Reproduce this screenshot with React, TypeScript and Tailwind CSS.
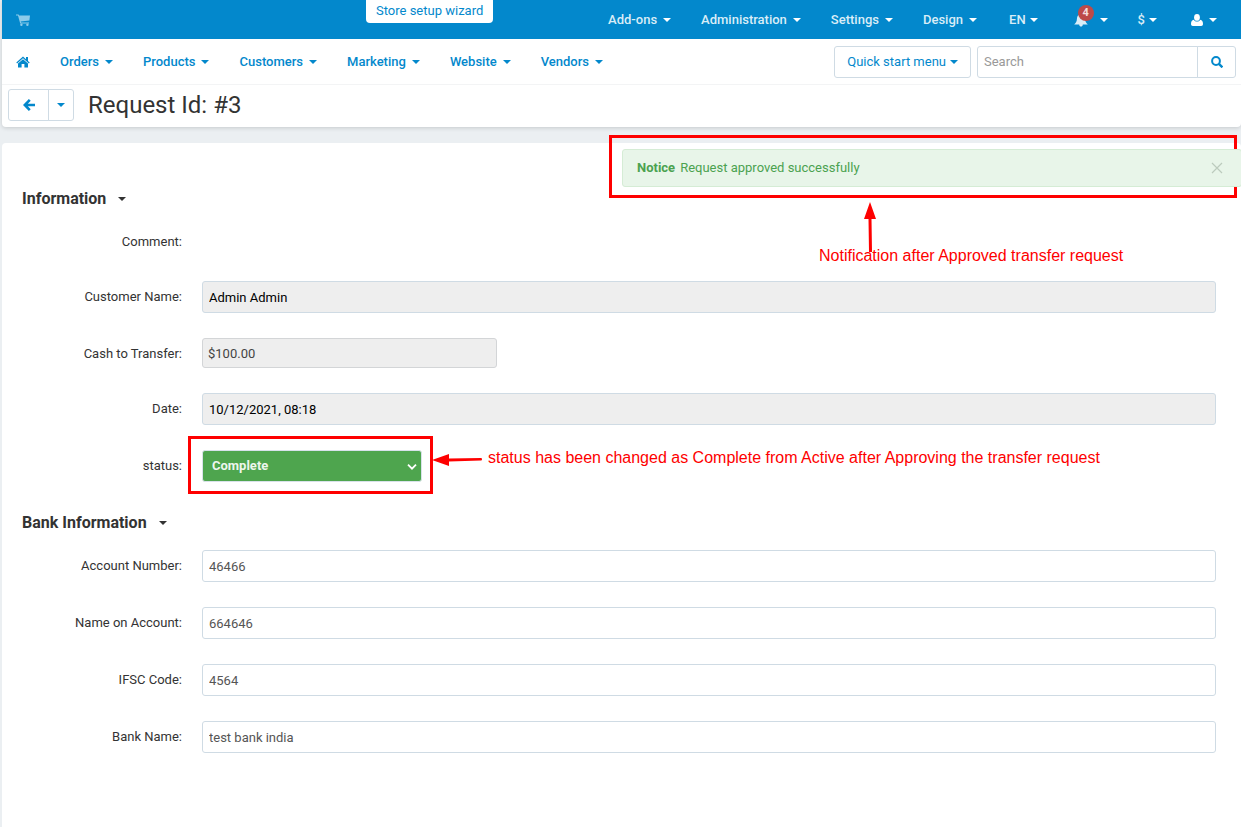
import type { ReactNode } from "react";

function Caret({ className = "" }: { className?: string }) {
  return (
    <svg className={`h-1 w-2 shrink-0 ${className}`} viewBox="0 0 8 4" fill="currentColor" aria-hidden="true">
      <path d="M0 0h8L4 4z" />
    </svg>
  );
}

function CartIcon() {
  return (
    <svg className="h-3 w-3.5" viewBox="0 0 14 12" fill="currentColor" aria-hidden="true">
      <path d="M0 .4h2.600l.5 1.100H14l-.6 4.900-8.700 1 .3 1h8v1.100H4.200L2 1.400H0z" />
      <circle cx="5.400" cy="10.800" r="1.200" />
      <circle cx="11.400" cy="10.800" r="1.200" />
    </svg>
  );
}

function HomeIcon() {
  return (
    <svg className="h-3 w-3.5" viewBox="0 0 14 12" fill="currentColor" aria-hidden="true">
      <path d="M7 .5 10 3.200V1h2v4l1.700 1.500-.8.900L7 2.200 1.100 7.400l-.8-.9z" />
      <path d="M7 3.200 12 7.600V11.500H8.400V8H5.600v3.500H2V7.600z" />
    </svg>
  );
}

function BellIcon() {
  return (
    <svg className="h-3.5 w-3.5" viewBox="0 0 14 14" fill="currentColor" aria-hidden="true">
      <path d="M7 .5c.7 0 1.100.4 1.100 1C10.200 2 11 3.800 11.100 6c.1 2.400.9 3.900 2.700 5.500H.2C2 9.900 2.800 8.400 2.900 6 3 3.800 3.800 2 5.900 1.500c0-.6.4-1 1.100-1zM5.200 11.500h3.600C8.700 13 8 13.600 7 13.600s-1.700-.6-1.800-2.100z" />
    </svg>
  );
}

function UserIcon() {
  return (
    <svg className="h-3 w-3" viewBox="0 0 12 12" fill="currentColor" aria-hidden="true">
      <ellipse cx="6" cy="3.400" rx="2.900" ry="3.400" />
      <path d="M2.700 5.700C1 6.100 0 7.400 0 10c0 1.300.7 2 1.800 2h8.400c1.100 0 1.800-.7 1.800-2 0-2.600-1-3.900-2.700-4.300C8.500 7 7.300 7.600 6 7.600S3.500 7 2.700 5.700z" />
    </svg>
  );
}

function BackIcon() {
  return (
    <svg className="h-3 w-3" viewBox="0 0 12 12" fill="none" stroke="currentColor" strokeWidth="2.600" aria-hidden="true">
      <path d="M6.800.9 1.800 6l5 5.100M2 6h10" />
    </svg>
  );
}

function SearchIcon() {
  return (
    <svg className="h-3 w-3" viewBox="0 0 12 12" fill="none" stroke="currentColor" strokeWidth="2" aria-hidden="true">
      <circle cx="5" cy="5" r="3.900" />
      <path d="m7.900 7.900 3.500 3.500" strokeWidth="2.300" />
    </svg>
  );
}

function TopItem({ children, label, className = "gap-1.5" }: { children: ReactNode; label?: string; className?: string }) {
  return (
    <button type="button" aria-label={label} className={`flex items-center font-medium text-[#d9edf7] ${className}`}>
      {children}
      <Caret className="text-white" />
    </button>
  );
}

function TopBar() {
  return (
    <header className="flex h-[39px] items-center bg-[#0388cc] pr-6 pl-3.5">
      <a href="#store" aria-label="Storefront" className="text-[#8ccbea]">
        <CartIcon />
      </a>
      <a href="#wizard" className="ml-[336px] h-[23px] self-start rounded-b-[4px] bg-white px-2.5 leading-[21px] whitespace-nowrap text-[#0388cc]">
        Store setup wizard
      </a>
      <nav className="ml-auto flex items-center gap-[30px] whitespace-nowrap">
        <TopItem>Add-ons</TopItem>
        <TopItem>Administration</TopItem>
        <TopItem>Settings</TopItem>
        <TopItem>Design</TopItem>
        <TopItem className="ml-0.5 gap-1">EN</TopItem>
        <TopItem label="Notifications" className="ml-1.5 gap-3">
          <span className="relative">
            <BellIcon />
            <span className="absolute -top-2 left-1 size-4 rounded-full bg-[#bd4a49] text-center text-[11px] leading-4 font-bold text-[#f3dddd]">4</span>
          </span>
        </TopItem>
        <TopItem label="Currency" className="gap-1">$</TopItem>
        <TopItem label="Account" className="ml-1 gap-1.5">
          <span className="text-white"><UserIcon /></span>
        </TopItem>
      </nav>
    </header>
  );
}

const menus = ["Orders", "Products", "Customers", "Marketing", "Website", "Vendors"];

function MainNav() {
  return (
    <div className="flex h-[46px] items-center border-b border-[#f3f4f5] pr-[5px] pl-3.5 text-[#0388cc]">
      <nav className="flex items-center gap-[30px] font-medium">
        <a href="#home" aria-label="Home">
          <HomeIcon />
        </a>
        {menus.map((m) => (
          <button type="button" key={m} className="flex items-center gap-1.5">
            {m}
            <Caret />
          </button>
        ))}
      </nav>
      <button type="button" className="ml-auto flex h-8 items-center gap-1 rounded-[3px] border border-[#cfdbe4] px-3">
        Quick start menu
        <Caret />
      </button>
      <form className="ml-1.5 flex" onSubmit={(e) => e.preventDefault()}>
        <input
          type="search"
          aria-label="Search"
          placeholder="Search"
          className="h-8 w-[221px] rounded-l-[3px] border border-[#cfdbe4] px-1.5 outline-none placeholder:text-[#999]"
        />
        <button type="submit" aria-label="Submit search" className="-ml-px flex h-8 w-[39px] items-center justify-center rounded-r-[3px] border border-[#cfdbe4]">
          <SearchIcon />
        </button>
      </form>
    </div>
  );
}

function TitleBar() {
  return (
    <div className="flex h-[42px] items-center pb-0.5 pl-1.5">
      <div className="flex text-[#0388cc]">
        <button type="button" aria-label="Back" className="flex h-8 w-[41px] items-center justify-center rounded-l-[3px] border border-[#cfdbe4]">
          <BackIcon />
        </button>
        <button type="button" aria-label="Recent pages" className="-ml-px flex h-8 w-[26px] items-center justify-center rounded-r-[3px] border border-[#cfdbe4]">
          <Caret />
        </button>
      </div>
      <h1 className="ml-3.5 text-2xl text-[#333]">Request Id: #3</h1>
    </div>
  );
}

function Notice() {
  return (
    <div className="absolute -top-2 right-1 h-[63px] w-[628px] border-3 border-[#fe0000]">
      <div role="status" className="mt-[11px] -mr-2 ml-2.5 flex h-[38px] items-center rounded-[3px] border border-[#d5ecd5] bg-[#e8f5e9] pr-[18px] pl-3.5 text-[#4ba250]">
        <strong className="mr-[5px] font-bold">Notice</strong>
        Request approved successfully
        <button type="button" aria-label="Close" className="ml-auto text-[#bccbbd]">
          <svg className="size-3" viewBox="0 0 12 12" stroke="currentColor" strokeWidth="1.200" aria-hidden="true">
            <path d="m1 1 10 10M11 1 1 11" />
          </svg>
        </button>
      </div>
      <svg className="absolute top-16 left-[252px] h-[50px] w-3" viewBox="0 0 12 50" fill="#fe0000" aria-hidden="true">
        <path d="M6 0l6 17H7.500l.5 33H5L4.500 17H0z" />
      </svg>
      <p className="absolute top-[108px] left-[207px] font-[Liberation_Sans,Arial,sans-serif] text-base leading-5 whitespace-nowrap text-[#fe0000]">
        Notification after Approved transfer request
      </p>
    </div>
  );
}

function SectionTitle({ children }: { children: ReactNode }) {
  return (
    <h2 className="text-base leading-6 font-bold text-[#333]">
      <button type="button" className="flex items-center gap-3">
        {children}
        <Caret />
      </button>
    </h2>
  );
}

function Row({ id, label, children }: { id: string; label: string; children?: ReactNode }) {
  return (
    <div className="flex">
      <label htmlFor={id} className="mr-5 h-[30px] w-40 shrink-0 text-right leading-8 text-[#333]">
        {label}:
      </label>
      {children}
    </div>
  );
}

const field = "min-w-0 rounded-[3px] border";

export default function App() {
  return (
    <div className="min-h-screen overflow-x-hidden bg-[#ebeff2] pl-0.5 font-[Roboto,sans-serif] text-[13px] leading-5">
      <div className="flex min-h-screen flex-col">
        <div className="rounded-b-[4px] bg-white shadow-[0_1px_4px_rgba(0,0,0,0.16)]">
          <TopBar />
          <MainNav />
          <TitleBar />
        </div>
        <main className="relative mt-4 grow rounded-t-[4px] bg-white pt-11 pr-[25px] pb-8 pl-5">
          <Notice />
          <SectionTitle>Information</SectionTitle>
          <div className="mt-[15px] flex flex-col gap-[25px]">
            <Row id="comment" label="Comment">
              <output id="comment" className="h-[30px] grow" />
            </Row>
            <Row id="customer" label="Customer Name">
              <input id="customer" readOnly defaultValue="Admin Admin" className={`${field} h-8 grow border-[#cfdbe4] bg-[#eee] px-1.5 text-black`} />
            </Row>
            <Row id="cash" label="Cash to Transfer">
              <input id="cash" readOnly defaultValue="$100.00" className={`${field} h-[30px] w-[295px] border-[#d3d5d7] bg-[#eee] px-[5px] text-[#444]`} />
            </Row>
            <Row id="date" label="Date">
              <input id="date" readOnly defaultValue="10/12/2021, 08:18" className={`${field} h-8 grow border-[#cfdbe4] bg-[#eee] px-1.5 text-black`} />
            </Row>
            <Row id="status" label="status">
              <div className="relative h-8 w-[220px]">
                <select id="status" defaultValue="complete" className="h-8 w-full appearance-none rounded-[3px] border border-[#d8e2ea] bg-[#4ea54e] px-[9px] font-bold text-[#edf6ed]">
                  <option value="complete">Complete</option>
                  <option value="active">Active</option>
                </select>
                <svg className="pointer-events-none absolute top-3.5 right-[5px] h-1.5 w-2.5" viewBox="0 0 10 6" fill="none" stroke="white" strokeWidth="1.800" aria-hidden="true">
                  <path d="m1 .7 4 4 4-4" />
                </svg>
                <div className="pointer-events-none absolute -top-3.5 -left-3.5 h-[58px] w-[245px] border-3 border-[#fe0000]" />
                <svg className="absolute top-1 left-[230px] h-3 w-[50px]" viewBox="0 0 50 12" fill="#fe0000" aria-hidden="true">
                  <path d="M0 6 17 0v4.500l32-.6q1 0 1 1.300t-1 1.400l-32 .8V12z" />
                </svg>
                <p className="absolute -top-0.5 left-[286px] font-[Liberation_Sans,Arial,sans-serif] text-base leading-5 whitespace-nowrap text-[#fe0000]">
                  status has been changed as Complete from Active after Approving the transfer request
                </p>
              </div>
            </Row>
          </div>
          <div className="mt-[29px]">
            <SectionTitle>Bank Information</SectionTitle>
          </div>
          <div className="mt-[15px] flex flex-col gap-[25px]">
            {[
              ["account", "Account Number", "46466"],
              ["holder", "Name on Account", "664646"],
              ["ifsc", "IFSC Code", "4564"],
              ["bank", "Bank Name", "test bank india"],
            ].map(([id, label, value]) => (
              <Row key={id} id={id} label={label}>
                <input id={id} defaultValue={value} className={`${field} h-8 grow border-[#cfdbe4] bg-white px-1.5 text-[#555]`} />
              </Row>
            ))}
          </div>
        </main>
      </div>
    </div>
  );
}
